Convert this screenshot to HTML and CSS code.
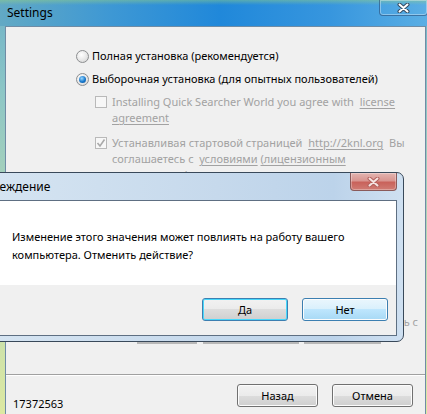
FILE: index.html
```html
<!DOCTYPE html>
<html lang="ru">
<head>
  <meta charset="UTF-8">
  <title>Settings</title>
  <link rel="stylesheet" href="styles.css">
</head>
<body>
  <div class="window">
    <div class="titlebar">
      <span class="title">Settings</span>
      <span class="close">
        <svg width="13" height="10" viewBox="0 0 13 10">
          <path d="M2.5 1.5 L10.5 8.5 M10.5 1.5 L2.5 8.5" stroke="#34495e" stroke-width="4" stroke-linecap="round"/>
          <path d="M2.5 1.5 L10.5 8.5 M10.5 1.5 L2.5 8.5" stroke="#fff" stroke-width="2" stroke-linecap="round"/>
        </svg>
      </span>
    </div>

    <div class="client">
      <div class="options">
        <label class="radio"><span class="radio-mark"></span>Полная установка (рекомендуется)</label>
        <label class="radio selected"><span class="radio-mark"></span>Выборочная установка (для опытных пользователей)</label>

        <div class="check">
          <span class="box"></span>
          <p>Installing Quick Searcher World you agree with&nbsp; <u>license</u><br><u>agreement</u></p>
        </div>
        <div class="check checked">
          <span class="box">
            <svg width="10" height="10" viewBox="0 0 10 10"><path d="M1.5 5 L4 8 L8.5 1.5" fill="none" stroke="#a9a9a9" stroke-width="1.6"/></svg>
          </span>
          <p>Устанавливая стартовой страницей&nbsp; <u>http://2knl.org</u>&nbsp; Вы<br>соглашаетесь с&nbsp; <u>условиями</u> <u>(лицензионным</u><br><u>соглашением)</u></p>
        </div>

        <div class="tail">Вы соглашаетесь с</div>
        <div class="under">
          <span class="seg seg1"></span>
          <span class="seg seg2"></span>
          <span class="seg seg3"></span>
        </div>
      </div>

      <div class="footer">
        <div class="footer-row">
          <span class="build">17372563</span>
          <div class="buttons">
            <button class="btn">Назад</button>
            <button class="btn">Отмена</button>
          </div>
        </div>
      </div>
    </div>
  </div>

  <!-- окно подтверждения поверх основного -->
  <div class="dialog">
    <div class="dlg-titlebar">
      <span class="dlg-title">Предупреждение</span>
      <span class="dlg-close">
        <svg width="13" height="10" viewBox="0 0 13 10">
          <path d="M2.5 1.5 L10.5 8.5 M10.5 1.5 L2.5 8.5" stroke="#b2605c" stroke-width="4" stroke-linecap="round"/>
          <path d="M2.5 1.5 L10.5 8.5 M10.5 1.5 L2.5 8.5" stroke="#f6e4e2" stroke-width="2" stroke-linecap="round"/>
        </svg>
      </span>
    </div>
    <div class="dlg-body">
      <div class="dlg-message">
        <p>Изменение этого значения может повлиять на работу вашего<br>компьютера. Отменить действие?</p>
      </div>
      <div class="dlg-buttons">
        <button class="btn btn-default">Да</button>
        <button class="btn btn-hover">Нет</button>
      </div>
    </div>
  </div>
</body>
</html>
```

FILE: styles.css
```css
body {
  margin: 0;
  width: 427px;
  height: 414px;
  overflow: hidden;
  position: relative;
  font-family: "Noto Sans", "Open Sans", sans-serif;
  font-size: 11px;
  color: #000;
}
p {
  margin: 0;
}
u {
  text-underline-offset: 2px;
}

/* основное окно */
.window {
  height: 414px;
  background: linear-gradient(to bottom, #6fb2c8 0, #8cc6c6 90px, #b9d9b2 250px, #dde9a2 414px);
}
.titlebar {
  height: 26px;
  display: flex;
  justify-content: space-between;
  align-items: flex-start;
  background:
    linear-gradient(to bottom, rgba(150, 210, 130, 0.45) 0, rgba(150, 210, 130, 0) 5px),
    linear-gradient(to right, #62a9c4 0, #3e98d4 110px, #2088da 220px, #3796de 330px, #5aaee4 427px);
}
.title {
  padding: 5px 0 0 7px;
  line-height: 16px;
  font-size: 12px;
}
.close {
  width: 47px;
  height: 15px;
  margin-right: -1px;
  border: 1px solid rgba(40, 70, 110, 0.55);
  border-top: none;
  border-radius: 0 0 4px 4px;
  box-shadow: inset 0 0 0 1px rgba(255, 255, 255, 0.35);
  display: flex;
  align-items: center;
  justify-content: center;
}
.client {
  margin-left: 5px;
  width: 421px;
  height: 388px;
  box-sizing: border-box;
  border: 1px solid #6f8ca5;
  border-bottom: none;
  background: #f0f0f0;
  display: flex;
  flex-direction: column;
}
.options {
  padding: 21px 0 0 70px;
}
.radio {
  display: flex;
  align-items: center;
  height: 16px;
  line-height: 16px;
  margin-bottom: 7px;
}
.radio-mark {
  width: 11px;
  height: 11px;
  margin-right: 3px;
  border: 1px solid #8c8e90;
  border-radius: 50%;
  background: radial-gradient(circle at 40% 35%, #ffffff 0, #e9e9e9 50%, #cfcfcf 100%);
  display: flex;
  align-items: center;
  justify-content: center;
}
.radio.selected .radio-mark::after {
  content: "";
  width: 7px;
  height: 7px;
  border-radius: 50%;
  background: radial-gradient(circle at 40% 35%, #9ad8ff 0, #1677cc 55%, #0b4f92 100%);
}
.check {
  display: flex;
  align-items: flex-start;
  margin-left: 19px;
  color: #a2a2a2;
  line-height: 16px;
}
.check + .check {
  margin-top: 9px;
}
.box {
  width: 10px;
  height: 10px;
  margin: 2px 5px 0 0;
  flex: none;
  border: 1px solid #b9b9b9;
  background: #f7f7f7;
  display: flex;
  align-items: center;
  justify-content: center;
}
.tail {
  margin-top: 131px;
  padding-right: 7px;
  text-align: right;
  color: #a2a2a2;
  line-height: 16px;
  white-space: nowrap;
}
.under {
  position: relative;
  height: 2px;
  margin-top: 12px;
}
.seg {
  display: inline-block;
  height: 2px;
  background: #b8b8b8;
  vertical-align: top;
}
.seg1 { margin-left: 61px; width: 60px; }
.seg2 { margin-left: 3px; width: 96px; }
.seg3 { margin-left: 2px; width: 77px; }

.footer {
  margin-top: auto;
  border-top: 1px solid #a0a0a0;
  box-shadow: inset 0 1px 0 #fff;
}
.footer-row {
  display: flex;
  justify-content: space-between;
  align-items: flex-end;
  height: 39px;
  box-sizing: border-box;
  padding: 0 12px 2px 7px;
}
.build {
  line-height: 16px;
}
.buttons {
  display: flex;
  gap: 14px;
  margin-bottom: 5px;
}

/* кнопки в стиле Windows 7 */
.btn {
  width: 81px;
  height: 23px;
  padding: 0;
  font: inherit;
  color: #000;
  border: 1px solid #707070;
  border-radius: 3px;
  background: linear-gradient(to bottom, #f2f2f2 0, #ebebeb 50%, #dddddd 50%, #cfcfcf 100%);
  box-shadow: inset 0 0 0 1px #fcfcfc;
}
.btn-default {
  border-color: #3c7fb1;
  box-shadow: inset 0 0 0 1px #48d8fb;
}
.btn-hover {
  border-color: #3c7fb1;
  background: linear-gradient(to bottom, #eaf6fd 0, #d9f0fc 50%, #bee6fd 50%, #a7d9f5 100%);
}

/* диалог */
.dialog {
  position: absolute;
  top: 172px;
  left: -63px;
  width: 467px;
  box-sizing: border-box;
  padding: 0 6px 5px 7px;
  border: 1px solid #39495a;
  border-radius: 7px;
  background: linear-gradient(to right, #d9e7f3 0, #c6d9ec 60%, #bcd3ea 85%, #cfe0f1 100%);
}
.dlg-titlebar {
  height: 27px;
  display: flex;
  justify-content: space-between;
  align-items: flex-start;
}
.dlg-title {
  line-height: 16px;
  padding: 6px 0 0 4px;
  font-size: 12px;
}
.dlg-close {
  width: 45px;
  height: 17px;
  border: 1px solid #8a5a5a;
  border-top: none;
  border-radius: 0 0 4px 4px;
  background: linear-gradient(to bottom, #e3b5b1 0, #d99590 45%, #c9625b 55%, #d07c74 100%);
  box-shadow: inset 0 0 0 1px rgba(255, 255, 255, 0.3);
  display: flex;
  align-items: center;
  justify-content: center;
}
.dlg-body {
  border: 1px solid #5e6f82;
}
.dlg-message {
  height: 84px;
  box-sizing: border-box;
  padding: 27px 0 0 66px;
  background: #fff;
  line-height: 18px;
}
.dlg-buttons {
  height: 50px;
  box-sizing: border-box;
  padding: 13px 8px 0 0;
  background: #f0f0f0;
  display: flex;
  justify-content: flex-end;
  gap: 14px;
}
.dlg-buttons .btn {
  width: 86px;
}
```
